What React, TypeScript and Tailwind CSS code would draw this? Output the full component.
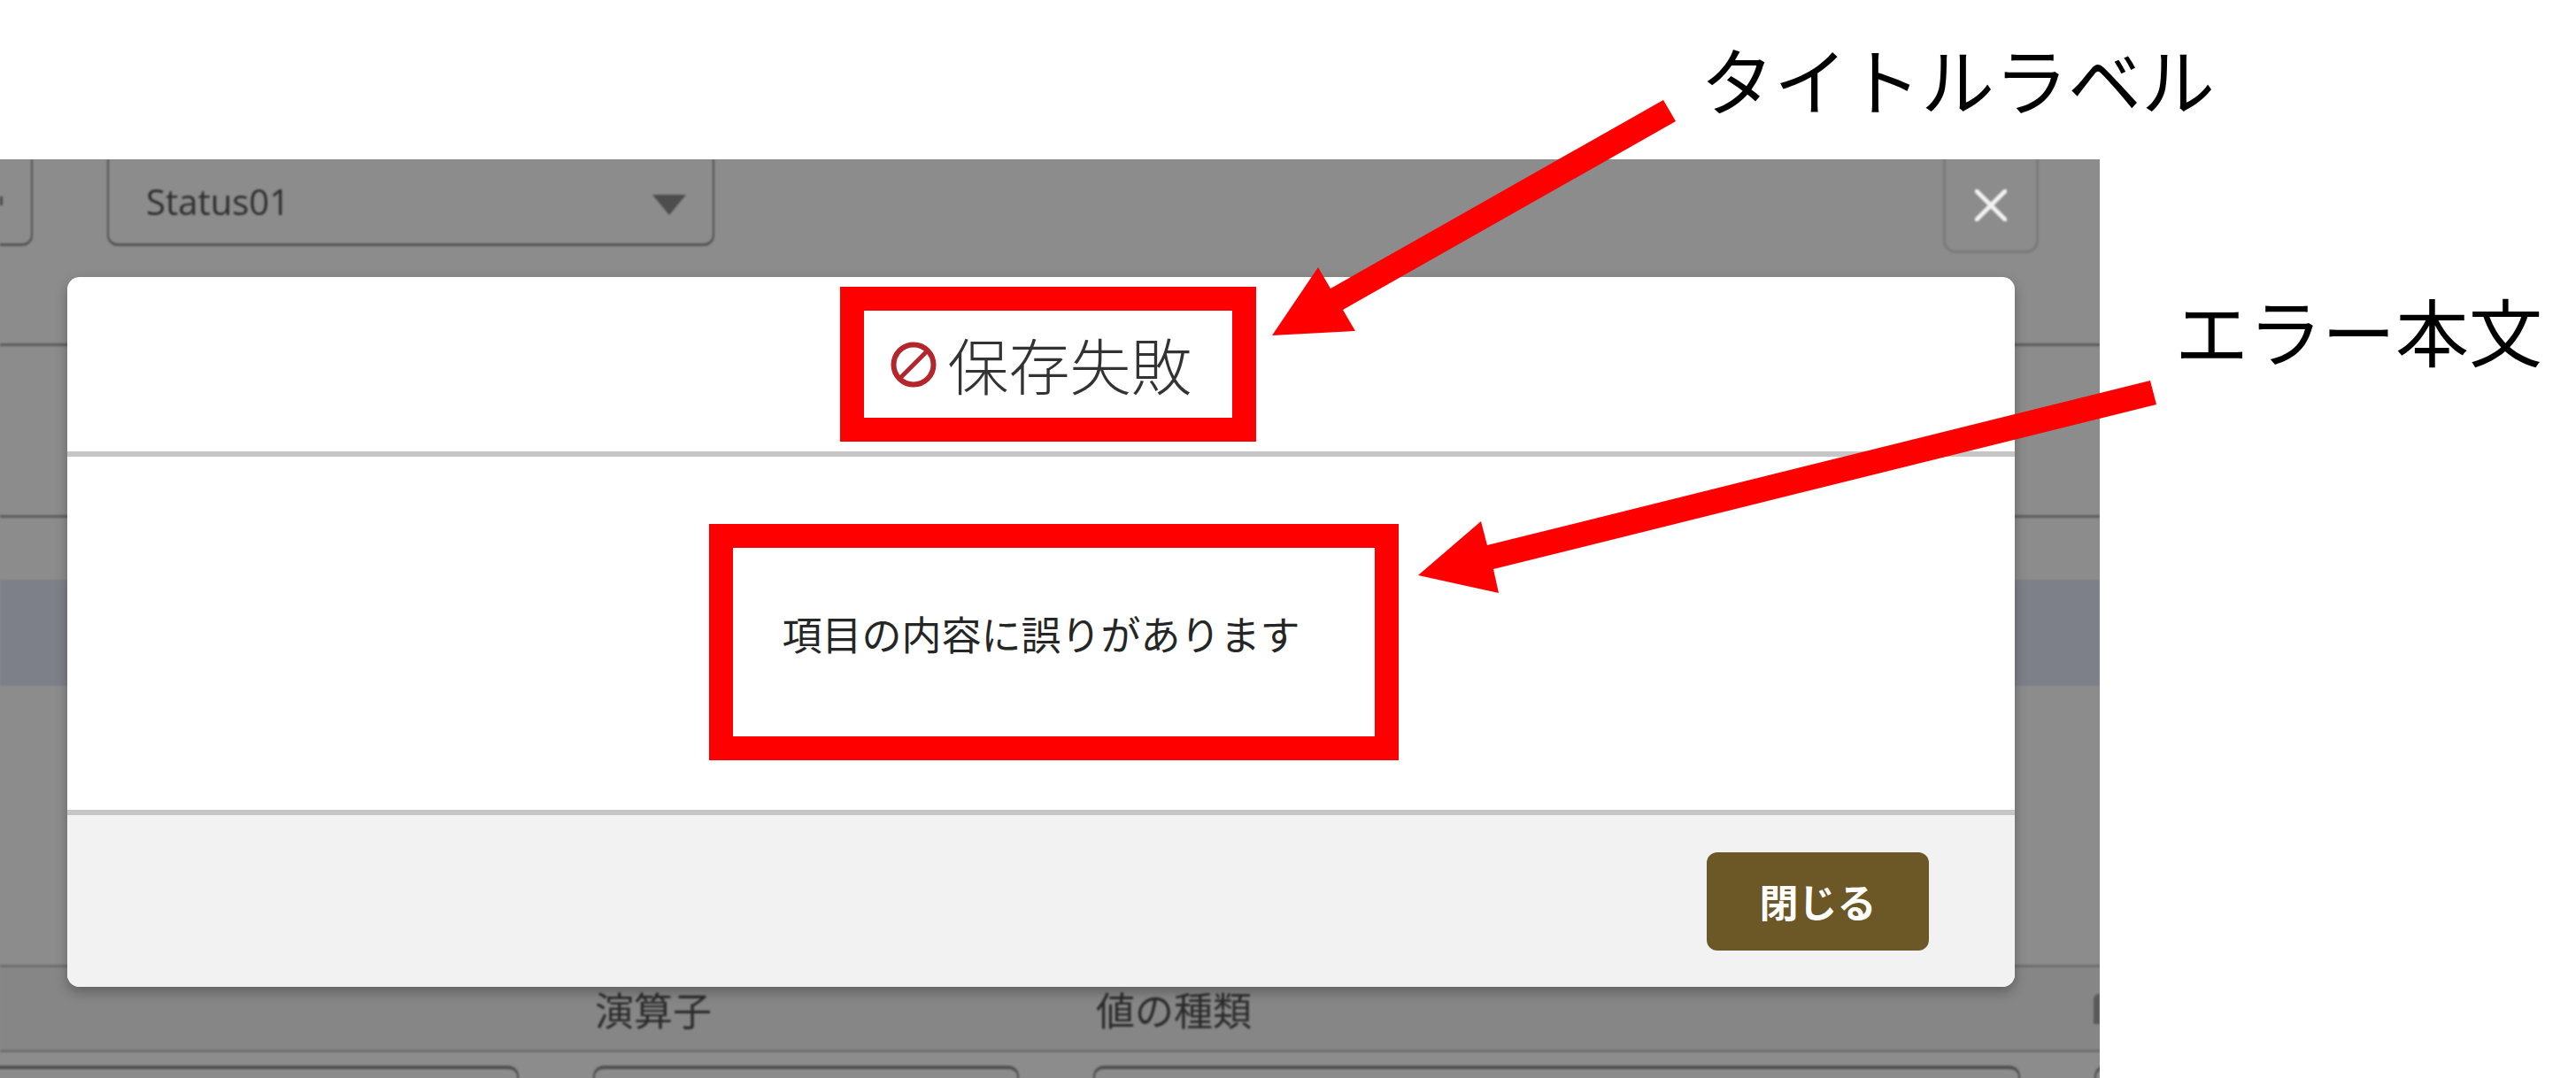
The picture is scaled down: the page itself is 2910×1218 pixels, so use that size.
// Annotated spec shot: error dialog over a dimmed form, with red callouts on top.

function BanIcon() {
  return (
    <svg viewBox="0 0 52 52" className="h-[52px] w-[52px] shrink-0" fill="none" stroke="#b5262c" strokeWidth="6">
      <circle cx="26" cy="26" r="22.5" />
      <path d="M41 11 11 41" strokeWidth="5" />
    </svg>
  );
}

function Dialog() {
  return (
    <div className="absolute left-[76px] top-[133px] flex h-[802px] w-[2200px] flex-col overflow-hidden rounded-[14px] bg-white shadow-[0_6px_14px_rgba(0,0,0,0.28)]">
      <div className="flex h-[203px] shrink-0 items-center justify-center gap-[13px] border-b-[6px] border-[#c6c6c6]">
        <BanIcon />
        <h2 className="text-[69px] font-light leading-none text-[#333333]">保存失敗</h2>
      </div>
      <div className="flex flex-1 items-center justify-center text-[45px] leading-none text-[#262626]">
        項目の内容に誤りがあります
      </div>
      <div className="flex h-[200px] shrink-0 items-center justify-end border-t-[6px] border-[#c6c6c6] bg-[#f2f2f2] pr-[97px]">
        <button className="h-[111px] w-[251px] rounded-[12px] bg-[#6c5726] text-[44px] font-bold leading-none text-white">
          閉じる
        </button>
      </div>
    </div>
  );
}

function Backdrop() {
  return (
    <div className="h-full w-full blur-[0.8px]">
      <div className="flex h-[211px] items-start border-b-[3px] border-[#5c5c5c]">
        <div className="flex h-[98px] w-[37px] items-start rounded-br-[12px] border-b-[3px] border-r-[2px] border-[#555555] pt-[42px]">
          <span className="h-[10px] w-[3px] bg-[#4a4a4a]" />
        </div>
        <div className="ml-[84px] flex h-[98px] w-[686px] items-center justify-between rounded-b-[12px] border-x-[2px] border-b-[3px] border-[#555555] pl-[42px] pr-[30px]">
          <span className="font-['Open_Sans',sans-serif] text-[40px] leading-none text-[#2e2e2e]">Status01</span>
          <span className="mt-[8px] h-0 w-0 border-x-[19px] border-t-[23px] border-x-transparent border-t-[#4d4d4d]" />
        </div>
        <div className="ml-auto mr-[69px] flex h-[106px] w-[108px] items-center justify-center rounded-b-[14px] border-x-[3px] border-b-[3px] border-[#7a7a7a]">
          <svg viewBox="0 0 36 36" className="h-[36px] w-[36px]" stroke="#f2f2f2" strokeWidth="5" strokeLinecap="round">
            <path d="M2 2 34 34M34 2 2 34" />
          </svg>
        </div>
      </div>
      <div className="h-[194px] border-b-[3px] border-[#5c5c5c]" />
      <div className="mt-[70px] h-[120px] bg-[#7e8089]" />
      <div className="h-[318px] border-b-[3px] border-[#6e6e6e]" />
      <div className="flex h-[96px] items-center border-b-[3px] border-[#6e6e6e] bg-[#868686] text-[44px] leading-none text-[#2b2b2b]">
        <span className="ml-[672px] w-[566px]">演算子</span>
        <span>値の種類</span>
        <span className="ml-[951px] h-[34px] w-[7px] rounded-tl-[6px] bg-[#5a5a5a]" />
      </div>
      <div className="flex gap-[84px] pt-[15px]">
        <div className="-ml-[20px] h-[60px] w-[606px] shrink-0 rounded-t-[12px] border-x-[2px] border-t-[4px] border-[#505050]" />
        <div className="h-[60px] w-[481px] shrink-0 rounded-t-[12px] border-x-[2px] border-t-[4px] border-[#505050]" />
        <div className="h-[60px] w-[1047px] shrink-0 rounded-t-[12px] border-x-[2px] border-t-[4px] border-[#505050]" />
        <div className="h-[60px] w-[60px] shrink-0 rounded-t-[12px] border-x-[2px] border-t-[4px] border-[#505050]" />
      </div>
    </div>
  );
}

function Callouts() {
  return (
    <>
      <svg viewBox="0 0 2910 1218" className="pointer-events-none absolute left-0 top-0 h-[1218px] w-[2910px]" fill="#ff0000">
        <polygon points="1437,379 1489,302 1503,326 1879,113 1893,137 1517,350 1531,374" />
        <polygon points="1602,650 1673,589 1680,616 2429,430 2436,457 1687,643 1693,670" />
      </svg>
      <div className="absolute left-[949px] top-[324px] h-[175px] w-[470px] border-[27px] border-[#ff0000]" />
      <div className="absolute left-[801px] top-[592px] h-[267px] w-[779px] border-[27px] border-[#ff0000]" />
      <span className="absolute left-[1921px] top-[47px] whitespace-nowrap text-[83px] leading-none text-black">タイトルラベル</span>
      <span className="absolute left-[2457px] top-[331px] whitespace-nowrap text-[83px] leading-none text-black">エラー本文</span>
    </>
  );
}

export default function App() {
  return (
    <div className="relative h-[1218px] w-[2910px] overflow-hidden bg-white pt-[180px] font-['Noto_Sans_CJK_JP','Inter',sans-serif]">
      <div className="relative h-[1038px] w-[2372px] overflow-hidden bg-[#8c8c8c]">
        <Backdrop />
        <Dialog />
      </div>
      <Callouts />
    </div>
  );
}
